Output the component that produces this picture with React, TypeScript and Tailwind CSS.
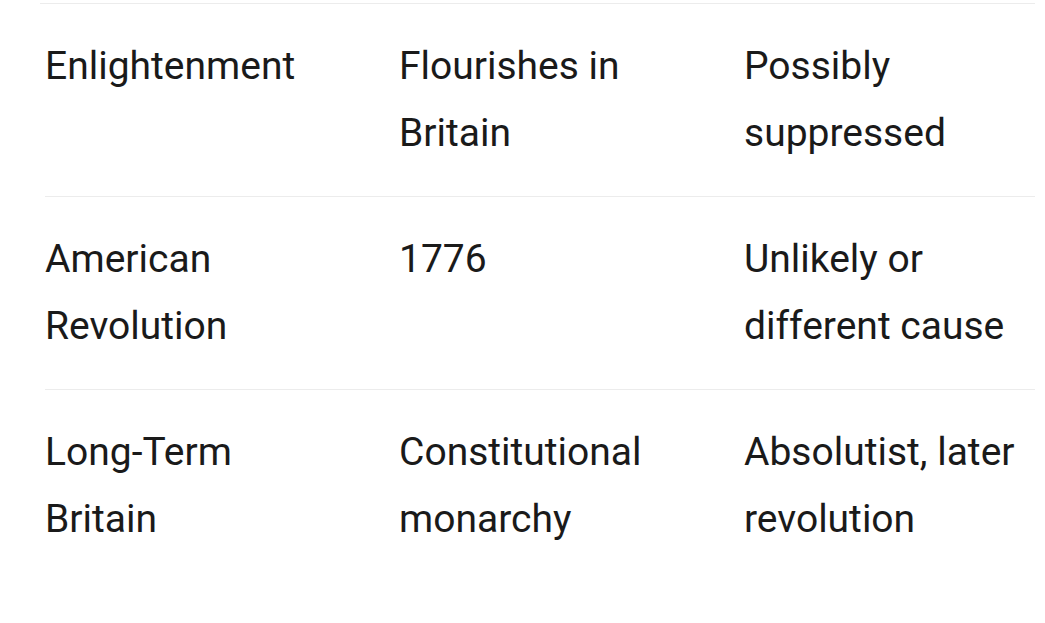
const rows = [
  ['Enlightenment', 'Flourishes in Britain', 'Possibly suppressed'],
  ['American Revolution', '1776', 'Unlikely or different cause'],
  ['Long-Term Britain', 'Constitutional monarchy', 'Absolutist, later revolution'],
];

export default function App() {
  return (
    <div className="min-h-[623px] w-full bg-white pt-[3px] text-[#1a1a1a] font-['Roboto',sans-serif]">
      <div className="ml-[40px] mr-[10px] h-px bg-[#ececec]" />
      <div className="ml-[45px] mr-[10px]">
        {rows.map((row, index) => (
          <div
            key={row[0]}
            className={`grid grid-cols-[354px_345px_1fr] pt-[29px] pb-[29px] text-[39px] leading-[67px] ${
              index < rows.length - 1 ? 'border-b border-[#ececec]' : ''
            }`}
          >
            <div className="pr-[74px]">{row[0]}</div>
            <div className="pr-[55px]">{row[1]}</div>
            <div>{row[2]}</div>
          </div>
        ))}
      </div>
    </div>
  );
}
